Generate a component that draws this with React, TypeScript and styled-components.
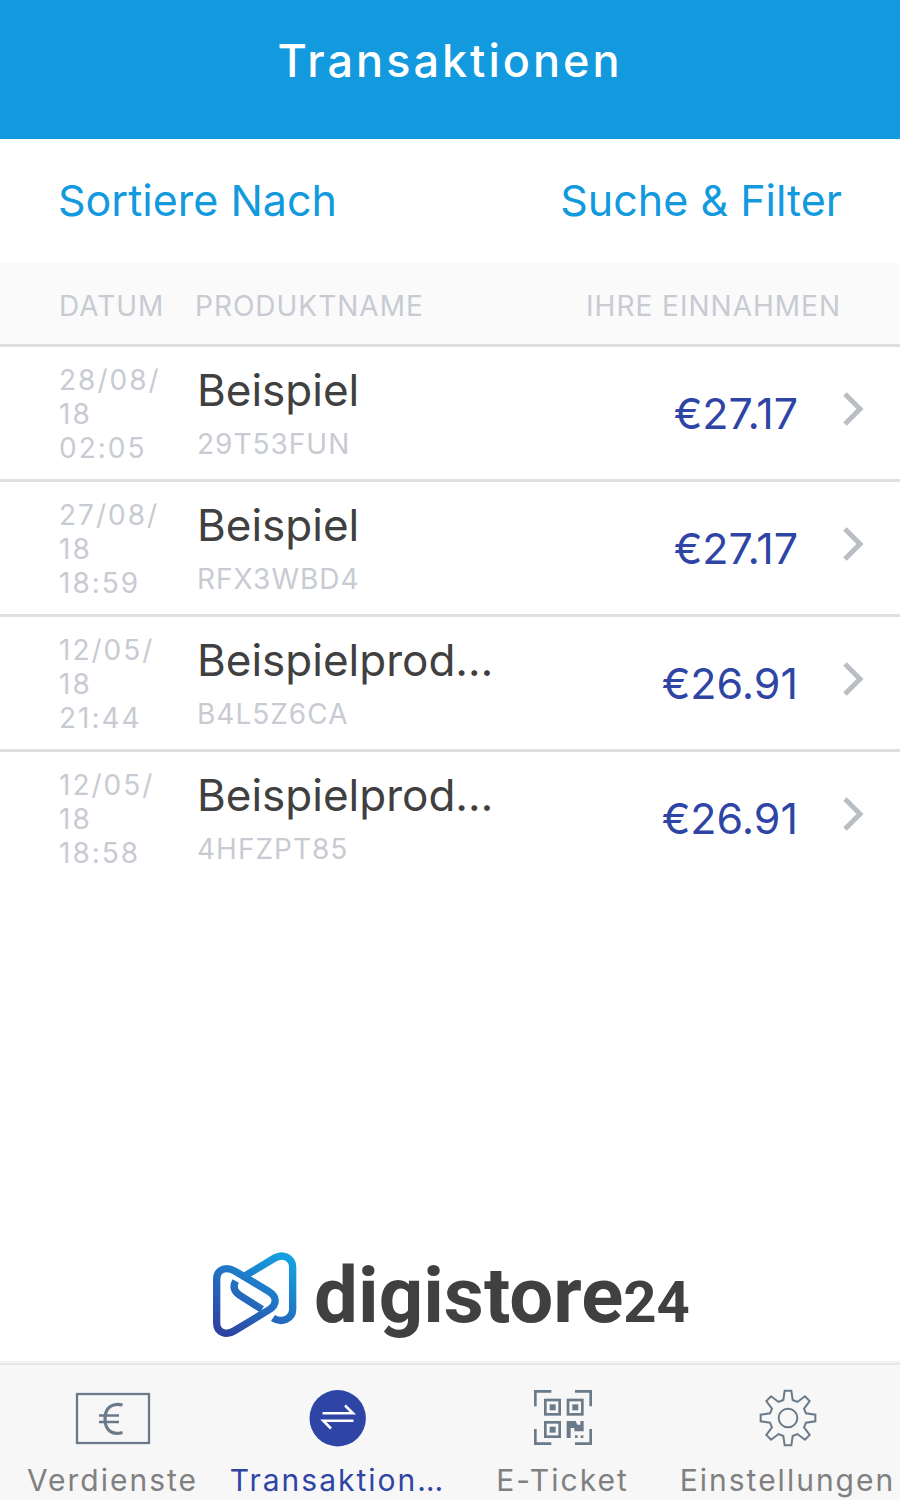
import React from 'react';
import styled, { createGlobalStyle } from 'styled-components';

const colors = {
  brand: '#1399dd',
  indigo: '#2f45a5',
  ink: '#404040',
  muted: '#c8cbd2',
  slate: '#6b7a89',
  label: '#808080',
  line: '#dfdfdf',
};

const GlobalStyle = createGlobalStyle`
  * { box-sizing: border-box; }
  body {
    margin: 0;
    background: #fff;
    font-family: Inter, "Liberation Sans", sans-serif;
  }
`;

const Page = styled.div`
  display: flex;
  flex-direction: column;
  min-height: 100vh;
`;

const Header = styled.header`
  display: flex;
  justify-content: center;
  padding: 34px 20px 51px;
  background: ${colors.brand};
`;

const Title = styled.h1`
  margin: 0;
  color: #fff;
  font-size: 45px;
  font-weight: 500;
  line-height: 54px;
  letter-spacing: 3px;
`;

const Toolbar = styled.div`
  display: flex;
  justify-content: space-between;
  padding: 34px 58px 36px;
`;

const TextButton = styled.button`
  padding: 0;
  border: 0;
  background: none;
  color: ${colors.brand};
  font: 400 43px/54px Inter, "Liberation Sans", sans-serif;
  cursor: pointer;
`;

const Table = styled.table`
  width: 100%;
  border-collapse: collapse;
  table-layout: fixed;
`;

const Column = styled.col<{ $width?: number }>`
  width: ${(p) => (p.$width ? `${p.$width}px` : 'auto')};
`;

const HeadCell = styled.th<{ $align?: 'left' | 'right' }>`
  padding: 26px 0 21px;
  background: #fafafa;
  color: ${colors.muted};
  font-size: 28px;
  font-weight: 400;
  line-height: 34px;
  letter-spacing: 1px;
  text-align: ${(p) => p.$align ?? 'left'};
  white-space: nowrap;

  &:first-child { padding-left: 59px; }
  &:last-child { padding-right: 59px; }
`;

const Row = styled.tr`
  border-top: 3px solid ${colors.line};
`;

const Cell = styled.td`
  padding: 16px 0 14px 2px;
  vertical-align: top;

  &:first-child { padding-left: 59px; }
`;

const Meta = styled.span<{ $spacing?: number }>`
  display: block;
  color: ${colors.muted};
  font-size: 28px;
  line-height: 34px;
  letter-spacing: ${(p) => p.$spacing ?? 1}px;
`;

const ProductName = styled.span`
  display: block;
  margin-bottom: 10px;
  color: ${colors.ink};
  font-size: 44px;
  line-height: 54px;
  white-space: nowrap;
`;

const Amount = styled.td`
  padding: 0;
  color: ${colors.indigo};
  font-size: 43px;
  line-height: 54px;
  text-align: right;
  vertical-align: middle;
`;

const ChevronCell = styled.td`
  padding: 0 36px 8px 0;
  vertical-align: middle;
`;

const ChevronButton = styled.button`
  display: block;
  margin-left: auto;
  padding: 0;
  border: 0;
  background: none;
  cursor: pointer;

  svg { display: block; }
`;

const Brand = styled.div`
  display: flex;
  align-items: center;
  justify-content: center;
  gap: 14px;
  margin-top: auto;
  padding: 40px 20px 20px;
`;

const Wordmark = styled.span`
  padding-top: 8px;
  color: ${colors.ink};
  font-family: Roboto, sans-serif;
  font-size: 78px;
  font-weight: 700;
  line-height: 82px;
`;

const WordmarkNumber = styled.span`
  font-size: 58px;
`;

const TabBar = styled.nav`
  display: grid;
  grid-template-columns: repeat(4, minmax(0, 1fr));
  padding: 23px 0 2px;
  border-top: 2px solid #e6e6e6;
  background: #f7f7f7;
  box-shadow: 0 -2px 0 #f3f3f3;
`;

const Tab = styled.a<{ $active?: boolean }>`
  display: flex;
  flex-direction: column;
  align-items: center;
  gap: 14px;
  color: ${(p) => (p.$active ? colors.indigo : colors.label)};
  font-size: 30px;
  line-height: 36px;
  letter-spacing: 2px;
  text-decoration: none;
  white-space: nowrap;
`;

const BanknoteIcon = () => (
  <svg width="76" height="60" viewBox="0 0 76 60" fill="none" stroke={colors.slate} aria-hidden="true">
    <rect x="2" y="6" width="72" height="49" strokeWidth="2.300" />
    <path d="M47.500 17C38 14.500 30 19 30 31S38 47.500 47.500 44.500" strokeWidth="3.200" />
    <path d="M24 27.500h20M24 34h20" strokeWidth="2.600" />
  </svg>
);

const TransferIcon = () => (
  <svg width="60" height="60" viewBox="0 0 60 60" fill="none" aria-hidden="true">
    <circle cx="29.700" cy="30.300" r="28.200" fill={colors.indigo} />
    <path d="M14.500 25.300H45L37 17.500M45.500 32.700H15.200L23 40.500" stroke="#fff" strokeWidth="2.500" />
  </svg>
);

const QrIcon = () => (
  <svg width="60" height="60" viewBox="39 24 180 180" fill="none" aria-hidden="true">
    <g stroke={colors.slate} strokeWidth="8">
      <path d="M46 79V34H94M165 34H212V79M46 147V191H94M165 191H212V147" />
      <rect x="76" y="60" width="43" height="43" />
      <rect x="144" y="60" width="43" height="43" />
      <rect x="76" y="127" width="43" height="43" />
    </g>
    <g fill={colors.slate}>
      <rect x="89" y="73" width="18" height="18" />
      <rect x="157" y="73" width="18" height="18" />
      <rect x="89" y="140" width="18" height="18" />
      <path d="M140 123h27l5 11h9v-11h10v31h-28v-10h-11v30h-12z" />
      <rect x="165" y="166" width="8" height="8" />
      <rect x="182" y="166" width="8" height="8" />
    </g>
  </svg>
);

const gearPoints = Array.from({ length: 8 }, (_, i) => {
  const angle = (i * Math.PI) / 4;
  return [[-14, -54], [-10, -82], [10, -82], [14, -54]]
    .map(([x, y]) => [
      x * Math.cos(angle) - y * Math.sin(angle),
      x * Math.sin(angle) + y * Math.cos(angle),
    ].map((n) => n.toFixed(1)).join(','))
    .join(' ');
}).join(' ');

const GearIcon = () => (
  <svg width="60" height="60" viewBox="-90 -90 180 180" fill="none" stroke={colors.slate} strokeWidth="6" aria-hidden="true">
    <polygon points={gearPoints} />
    <circle r="28" />
  </svg>
);

const BrandMark = () => (
  <svg width="90" height="90" viewBox="60 60 270 270" fill="none" aria-hidden="true">
    <defs>
      <linearGradient id="mark" gradientUnits="userSpaceOnUse" x1="100" y1="320" x2="260" y2="70">
        <stop offset="0" stopColor="#2f3f9f" />
        <stop offset="0.500" stopColor="#226fc0" />
        <stop offset="1" stopColor="#149fe0" />
      </linearGradient>
    </defs>
    <g stroke="url(#mark)" strokeWidth="22">
      <path d="M80 148C80 122 98 116 110 116C120 116 127 119 136 124L236 184C262 200 262 224 236 240L132 303C108 318 80 306 80 280Z" />
      <path d="M137 153C128 169 132 184 148 195L216 238" />
      <path d="M166 137L254 84C279 69 308 84 308 112V238C308 267 275 281 249 264" />
    </g>
  </svg>
);

const transactions = [
  { date: ['28/08/', '18', '02:05'], name: 'Beispiel', code: '29T53FUN', amount: '€27.17' },
  { date: ['27/08/', '18', '18:59'], name: 'Beispiel', code: 'RFX3WBD4', amount: '€27.17' },
  { date: ['12/05/', '18', '21:44'], name: 'Beispielprod…', code: 'B4L5Z6CA', amount: '€26.91' },
  { date: ['12/05/', '18', '18:58'], name: 'Beispielprod…', code: '4HFZPT85', amount: '€26.91' },
];

const tabs = [
  { label: 'Verdienste', Icon: BanknoteIcon },
  { label: 'Transaktion…', Icon: TransferIcon, active: true },
  { label: 'E-Ticket', Icon: QrIcon },
  { label: 'Einstellungen', Icon: GearIcon },
];

export default function App() {
  return (
    <Page>
      <GlobalStyle />
      <Header>
        <Title>Transaktionen</Title>
      </Header>
      <Toolbar>
        <TextButton type="button">Sortiere Nach</TextButton>
        <TextButton type="button">Suche &amp; Filter</TextButton>
      </Toolbar>
      <Table>
        <colgroup>
          <Column $width={195} />
          <Column />
          <Column $width={240} />
          <Column $width={102} />
        </colgroup>
        <thead>
          <tr>
            <HeadCell>DATUM</HeadCell>
            <HeadCell>PRODUKTNAME</HeadCell>
            <HeadCell $align="right" colSpan={2}>IHRE EINNAHMEN</HeadCell>
          </tr>
        </thead>
        <tbody>
          {transactions.map((t) => (
            <Row key={t.code}>
              <Cell>
                {t.date.map((part) => <Meta key={part} $spacing={2}>{part}</Meta>)}
              </Cell>
              <Cell>
                <ProductName>{t.name}</ProductName>
                <Meta>{t.code}</Meta>
              </Cell>
              <Amount>{t.amount}</Amount>
              <ChevronCell>
                <ChevronButton type="button" aria-label={`Details ${t.code}`}>
                  <svg width="22" height="36" viewBox="0 0 22 36" fill="none" stroke="#b9bec5" strokeWidth="5">
                    <path d="M3 3L18 18L3 33" />
                  </svg>
                </ChevronButton>
              </ChevronCell>
            </Row>
          ))}
        </tbody>
      </Table>
      <Brand>
        <BrandMark />
        <Wordmark>digistore<WordmarkNumber>24</WordmarkNumber></Wordmark>
      </Brand>
      <TabBar>
        {tabs.map(({ label, Icon, active }) => (
          <Tab key={label} href="#" $active={active} aria-current={active ? 'page' : undefined}>
            <Icon />
            {label}
          </Tab>
        ))}
      </TabBar>
    </Page>
  );
}
